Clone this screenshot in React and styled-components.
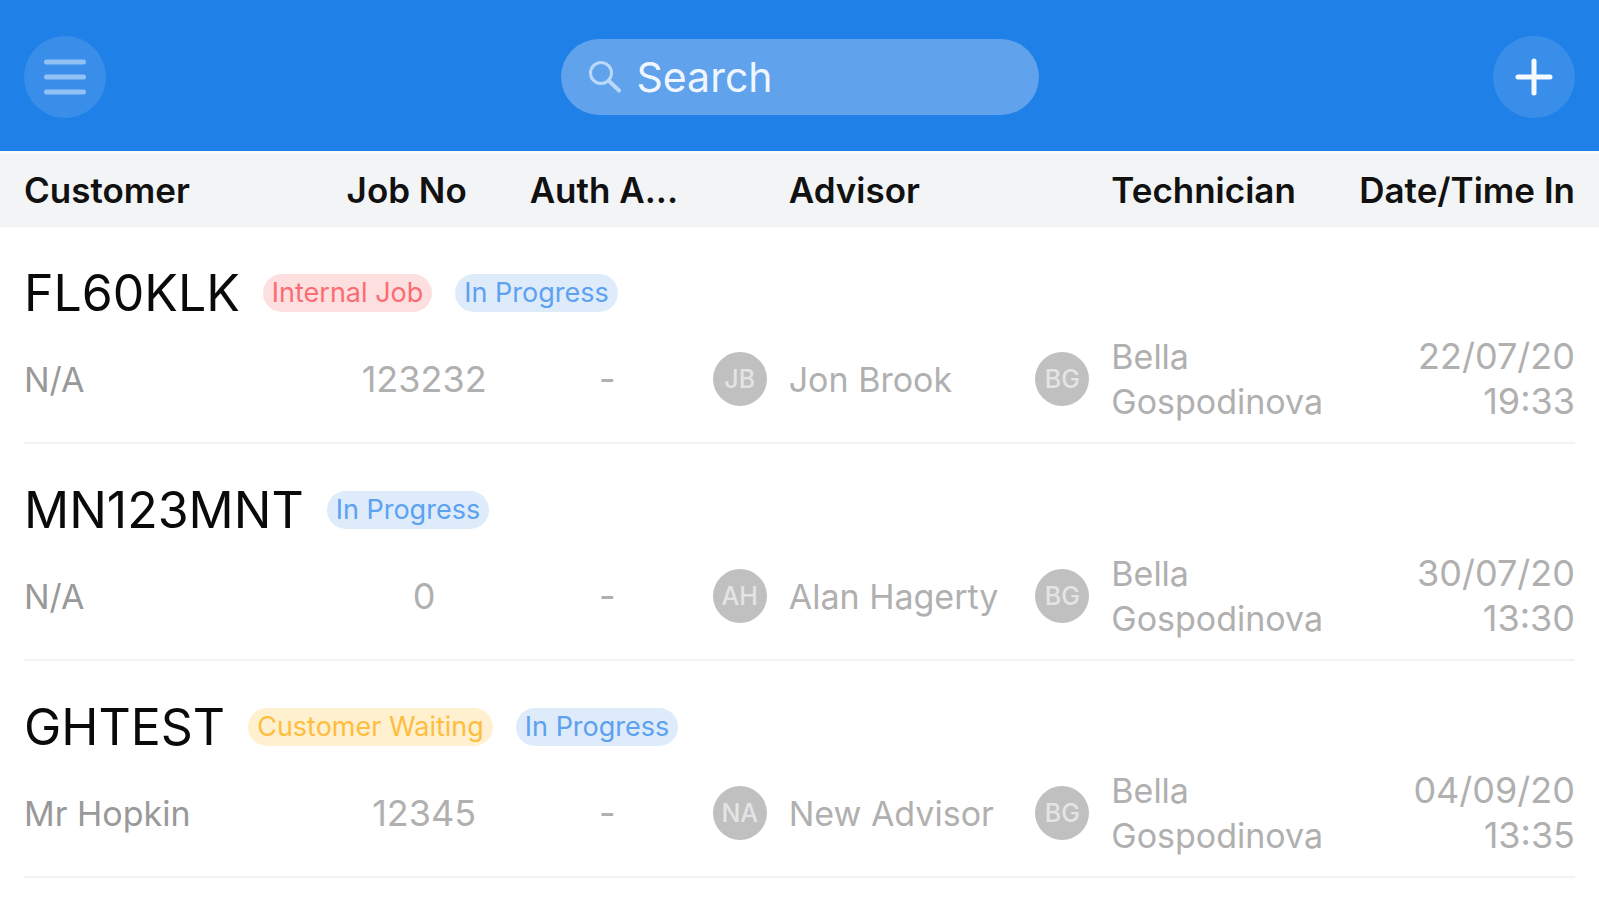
// ==========================================================================
// Job list
// ==========================================================================
import React from 'react';
import styled, { createGlobalStyle } from 'styled-components';

const GlobalStyle = createGlobalStyle`
  * {
    box-sizing: border-box;
  }
  body {
    margin: 0;
    background: #fff;
    color: #111;
    font-family: Inter, "Liberation Sans", sans-serif;
  }
`

const Header = styled.header`
  display: grid;
  grid-template-columns: 1fr 478px 1fr;
  align-items: center;
  padding: 36px 24px 33px;
  background: #1f80e8;
`

const RoundButton = styled.button`
  display: flex;
  align-items: center;
  justify-content: center;
  justify-self: ${props => props.$end ? "end" : "start"};
  width: 82px;
  height: 82px;
  padding: 0;
  border: 0;
  border-radius: 50%;
  background: #398eea;
  cursor: pointer;
`

const SearchBox = styled.label`
  display: flex;
  align-items: center;
  gap: 16px;
  height: 76px;
  padding: 0 26px;
  border-radius: 38px;
  background: #60a2eb;
`

const SearchInput = styled.input`
  flex: 1;
  min-width: 0;
  padding: 0;
  border: 0;
  outline: 0;
  background: none;
  color: #fff;
  font: 400 41px/56px Inter, "Liberation Sans", sans-serif;
  &::placeholder {
    color: #eff6ff;
    opacity: 1;
  }
`

const Table = styled.table`
  display: block;
`

const Head = styled.thead`
  display: block;
  padding: 0 24px;
  border-top: 3px solid #f9fafa;
  background: #f3f4f6;
`

const Job = styled.tbody`
  display: block;
  margin: 0 24px;
  padding: 36px 0 18px;
  border-bottom: 2px solid #f2f2f2;
`

const Row = styled.tr`
  display: grid;
  grid-template-columns: 19fr 10fr 10fr 19fr 19fr 14fr;
  column-gap: 28px;
  align-items: center;
`

const HeadCell = styled.th`
  min-width: 0;
  padding: 0;
  color: #111;
  font-size: 35px;
  font-weight: 600;
  line-height: 73px;
  text-align: ${props => props.$align || "left"};
  white-space: nowrap;
`

const NameHeadCell = styled(HeadCell)`
  padding-left: 76px;
`

const TitleCell = styled.th`
  display: flex;
  grid-column: 1 / -1;
  align-items: center;
  gap: 23px;
  height: 60px;
  margin-bottom: 11px;
  padding: 0;
  font-weight: 400;
`

const Plate = styled.span`
  color: #0a0a0a;
  font-size: 50px;
  line-height: 60px;
`

const tones = {
  red: { background: "#fddfe0", color: "#fb6c72" },
  blue: { background: "#deebfb", color: "#5da1f1" },
  amber: { background: "#fff0d0", color: "#ffbd3e" }
};

const Tag = styled.span`
  height: 38px;
  padding: 0 9px;
  border-radius: 19px;
  background: ${props => tones[props.$tone].background};
  color: ${props => tones[props.$tone].color};
  font-size: 27px;
  line-height: 38px;
  white-space: nowrap;
`

const Cell = styled.td`
  min-width: 0;
  padding: 0;
  color: ${props => props.$dark ? "#999" : "#b0b0b0"};
  font-size: ${props => props.$numeric ? "36px" : "34px"};
  line-height: 45px;
  text-align: ${props => props.$align || "left"};
`

const Person = styled.div`
  display: flex;
  align-items: center;
  gap: 22px;
`

const Avatar = styled.span`
  display: flex;
  flex: none;
  align-items: center;
  justify-content: center;
  width: 54px;
  height: 54px;
  border-radius: 50%;
  background: #c0c0c0;
  color: #e4e4e4;
  font-size: 25px;
  font-weight: 500;
`

const jobs = [
  {
    plate: "FL60KLK",
    tags: [["Internal Job", "red"], ["In Progress", "blue"]],
    customer: "N/A",
    number: "123232",
    advisor: ["JB", "Jon Brook"],
    date: "22/07/20",
    time: "19:33"
  },
  {
    plate: "MN123MNT",
    tags: [["In Progress", "blue"]],
    customer: "N/A",
    number: "0",
    advisor: ["AH", "Alan Hagerty"],
    date: "30/07/20",
    time: "13:30"
  },
  {
    plate: "GHTEST",
    tags: [["Customer Waiting", "amber"], ["In Progress", "blue"]],
    customer: "Mr Hopkin",
    number: "12345",
    advisor: ["NA", "New Advisor"],
    date: "04/09/20",
    time: "13:35"
  }
];

const PersonCell = ({initials, name}) => (
  <Cell>
    <Person>
      <Avatar>{initials}</Avatar>
      <span>{name}</span>
    </Person>
  </Cell>
);

const JobItem = ({job}) => (
  <Job>
    <Row>
      <TitleCell colSpan={6} scope="rowgroup">
        <Plate>{job.plate}</Plate>
        {job.tags.map(([label, tone]) => <Tag key={label} $tone={tone}>{label}</Tag>)}
      </TitleCell>
    </Row>
    <Row>
      <Cell $dark>{job.customer}</Cell>
      <Cell $numeric $align="center">{job.number}</Cell>
      <Cell $numeric $align="center">-</Cell>
      <PersonCell initials={job.advisor[0]} name={job.advisor[1]} />
      <PersonCell initials="BG" name="Bella Gospodinova" />
      <Cell $numeric $align="right">{job.date} {job.time}</Cell>
    </Row>
  </Job>
);

const App = () => (
  <>
    <GlobalStyle />
    <Header>
      <RoundButton type="button" aria-label="Menu">
        <svg width="42" height="36" viewBox="0 0 42 36" stroke="#92c1f5" strokeWidth="5" strokeLinecap="round">
          <path d="M2.500 3h37M2.500 18h37M2.500 33h37" />
        </svg>
      </RoundButton>
      <SearchBox>
        <svg width="34" height="34" viewBox="0 0 34 34" fill="none" stroke="#b9d8fa" strokeWidth="3" strokeLinecap="round">
          <circle cx="14" cy="13" r="10.500" />
          <path d="M22 21l10 9.500" strokeWidth="4" />
        </svg>
        <SearchInput type="search" placeholder="Search" aria-label="Search" />
      </SearchBox>
      <RoundButton type="button" aria-label="Add job" $end>
        <svg width="38" height="38" viewBox="0 0 38 38" stroke="#f5faff" strokeWidth="5" strokeLinecap="round">
          <path d="M3 19h32M19 3v32" />
        </svg>
      </RoundButton>
    </Header>
    <Table>
      <Head>
        <Row>
          <HeadCell scope="col">Customer</HeadCell>
          <HeadCell scope="col">Job No</HeadCell>
          <HeadCell scope="col">Auth A...</HeadCell>
          <NameHeadCell scope="col">Advisor</NameHeadCell>
          <NameHeadCell scope="col">Technician</NameHeadCell>
          <HeadCell scope="col" $align="right">Date/Time In</HeadCell>
        </Row>
      </Head>
      {jobs.map(job => <JobItem key={job.plate} job={job} />)}
    </Table>
  </>
);

export default App;
